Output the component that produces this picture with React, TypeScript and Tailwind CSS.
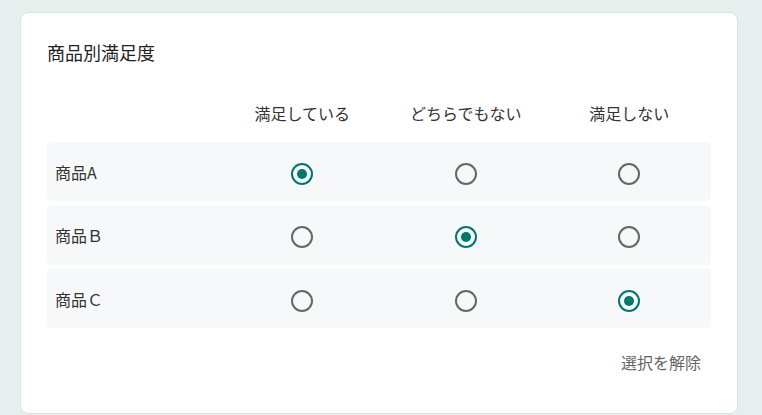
import { useState } from "react";

const columns = ["満足している", "どちらでもない", "満足しない"];

const items = [
  { id: "a", label: "商品A" },
  { id: "b", label: "商品Ｂ" },
  { id: "c", label: "商品Ｃ" },
];

function Radio({ checked, onClick }: { checked: boolean; onClick: () => void }) {
  return (
    <button
      type="button"
      onClick={onClick}
      className={`mt-[4px] flex h-[22px] w-[22px] items-center justify-center rounded-full border-2 ${
        checked ? "border-[#00786b]" : "border-[#666666]"
      }`}
    >
      {checked && <span className="h-[10px] w-[10px] rounded-full bg-[#00786b]" />}
    </button>
  );
}

export default function App() {
  const [answers, setAnswers] = useState<Record<string, number | null>>({ a: 0, b: 1, c: 2 });

  return (
    <div
      className="min-h-screen bg-[#e6efed] pl-[20px] pt-[12px]"
      style={{ fontFamily: '"Noto Sans CJK JP", "Noto Sans", sans-serif' }}
    >
      <div className="w-[718px] rounded-[8px] border border-[#dce2e1] bg-white px-[26px] pt-[26px] pb-[39px]">
        <h2 className="text-[18px] leading-[26px] text-[#222222]">商品別満足度</h2>

        <div className="mt-[26px]">
          {/* 見出し */}
          <div className="mb-[7px] grid h-[44px] grid-cols-[173.5px_1fr_1fr_1fr] items-center">
            <div />
            {columns.map(c => (
              <div key={c} className="text-center text-[16px] text-[#333333]">
                {c}
              </div>
            ))}
          </div>

          <div className="flex flex-col gap-[4.5px]">
            {items.map(item => (
              <div
                key={item.id}
                className="grid h-[59px] grid-cols-[173.5px_1fr_1fr_1fr] items-center rounded-[4px] bg-[#f7f8fa]"
              >
                <div className="pl-[8px] text-[16px] text-[#333333]">{item.label}</div>
                {columns.map((c, i) => (
                  <div key={c} className="flex justify-center">
                    <Radio
                      checked={answers[item.id] === i}
                      onClick={() => setAnswers(prev => ({ ...prev, [item.id]: i }))}
                    />
                  </div>
                ))}
              </div>
            ))}
          </div>
        </div>

        <div className="mt-[22px] flex justify-end">
          <button
            type="button"
            onClick={() => setAnswers({ a: null, b: null, c: null })}
            className="px-[10px] text-[16px] leading-[24px] text-[#666666]"
          >
            選択を解除
          </button>
        </div>
      </div>
    </div>
  );
}
